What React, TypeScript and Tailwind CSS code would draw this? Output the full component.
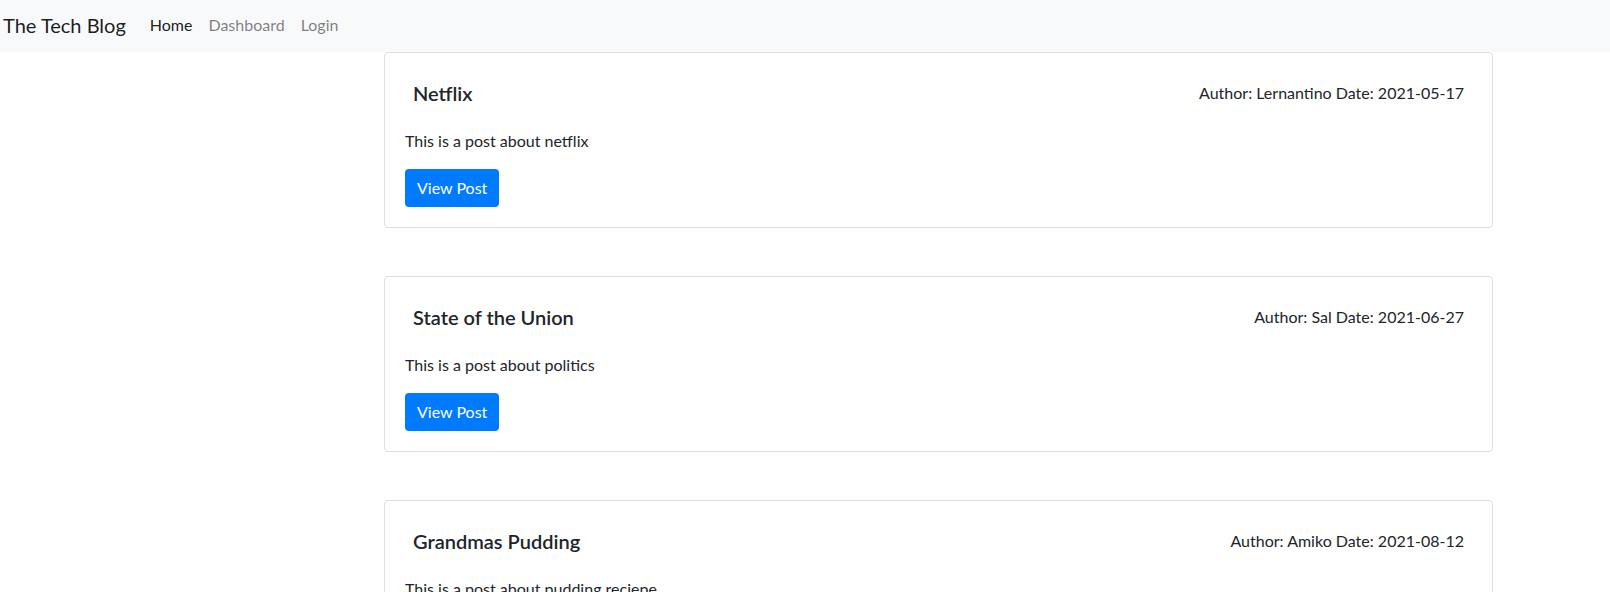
const posts = [
  { title: "Netflix", author: "Lernantino", date: "2021-05-17", body: "This is a post about netflix" },
  { title: "State of the Union", author: "Sal", date: "2021-06-27", body: "This is a post about politics" },
  { title: "Grandmas Pudding", author: "Amiko", date: "2021-08-12", body: "This is a post about pudding reciepe" },
];

function PostCard({ title, author, date, body }: (typeof posts)[number]) {
  return (
    <div className="w-[1109px] border border-[#dfdfdf] rounded bg-white p-5">
      <div className="flex items-center justify-between px-2 pt-[8px] pb-[24px]">
        <h5 className="text-[20px] leading-6 font-semibold text-[#212529]">{title}</h5>
        <span className="text-base leading-6 text-[#212529]">
          Author: {author} Date: {date}
        </span>
      </div>
      <p className="text-base leading-6 text-[#212529] mb-4">{body}</p>
      <button className="h-[38px] px-3 rounded bg-[#007bff] text-white text-base leading-6">
        View Post
      </button>
    </div>
  );
}

export default function App() {
  return (
    <div className="min-h-screen bg-white" style={{ fontFamily: "Lato, 'Open Sans', sans-serif" }}>
      <nav className="h-[52px] bg-[#f8f9fa] flex items-center pl-[3px] pb-[3px]">
        <span className="text-[20px] text-black/90 mr-4 pt-[1px]">The Tech Blog</span>
        <div className="flex">
          <a className="px-2 text-base text-black/90">Home</a>
          <a className="px-2 text-base text-black/50">Dashboard</a>
          <a className="px-2 text-base text-black/50">Login</a>
        </div>
      </nav>
      <main className="ml-[384px] flex flex-col gap-12">
        {posts.map((p) => (
          <PostCard key={p.title} {...p} />
        ))}
      </main>
    </div>
  );
}
